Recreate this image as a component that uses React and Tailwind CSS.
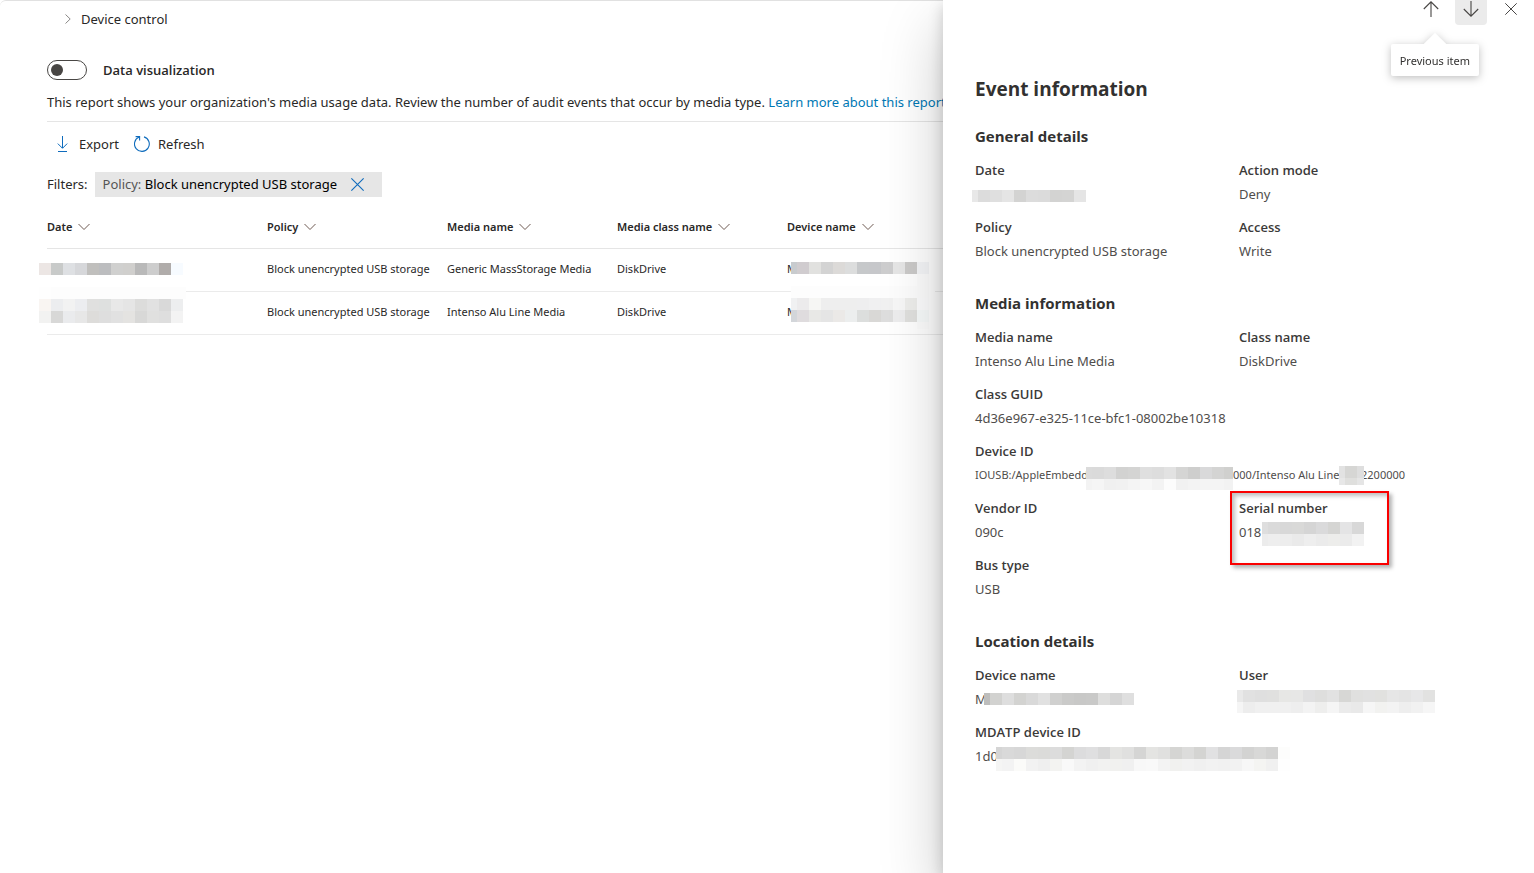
import React from "react";

const columns = [
  { name: "Date", width: "w-[220px]" },
  { name: "Policy", width: "w-[180px]" },
  { name: "Media name", width: "w-[170px]" },
  { name: "Media class name", width: "w-[170px]" },
  { name: "Device name", width: "" },
];

/* Redaction block: rows of 12px cells, the first cell of each row may be narrower. */
function Mosaic({ className, width, height, first = 12, rows }) {
  return (
    <svg
      role="img"
      aria-label="Redacted"
      width={width}
      height={height}
      shapeRendering="crispEdges"
      className={className}
    >
      {rows.map(({ y, h = 12, from = 0, cells }) =>
        cells.split(" ").map((color, i) => {
          const index = i + from;
          return (
            <rect
              key={y + "-" + index}
              x={index === 0 ? 0 : first + (index - 1) * 12}
              y={y}
              width={index === 0 ? first : 12}
              height={h}
              fill={"#" + color}
            />
          );
        })
      )}
    </svg>
  );
}

function ChevronDown() {
  return (
    <svg width="12" height="8" viewBox="0 0 12 8" fill="none" stroke="#6e5a52" aria-hidden="true">
      <path d="M0.5 1 L6 6.5 L11.5 1" />
    </svg>
  );
}

function Cross({ size, className }) {
  return (
    <svg width={size} height={size} viewBox="0 0 12 12" fill="none" stroke="currentColor" className={className} aria-hidden="true">
      <path d="M0.3 0.3 L11.7 11.7 M11.7 0.3 L0.3 11.7" />
    </svg>
  );
}

function Field({ label, wide, children }) {
  return (
    <div className={wide ? "relative col-span-2" : "relative"}>
      <dt className="font-['Open_Sans',sans-serif] text-[13px] leading-5 font-semibold text-[#3b3a39]">{label}</dt>
      <dd className="relative mt-1 flex h-5 text-[13px] leading-5 whitespace-nowrap text-[#4f4d4b]">{children}</dd>
    </div>
  );
}

function Section({ title, className, children }) {
  return (
    <section className={className}>
      <h3 className="font-['Open_Sans',sans-serif] text-[15px] leading-[22px] font-bold text-[#323130]">{title}</h3>
      <dl className="mt-[13px] grid grid-cols-[264px_1fr] gap-y-[13px]">{children}</dl>
    </section>
  );
}

function Report() {
  return (
    <main className="min-w-0 flex-1 overflow-hidden rounded-tl-md border-t border-[#e1e1e1] bg-white pl-[47px]">
      <nav className="flex items-center gap-[10px] pt-2 pl-[18px] text-[13px] leading-5">
        <svg width="6" height="10" viewBox="0 0 6 10" fill="none" stroke="#8a8886" aria-hidden="true">
          <path d="M0.5 0.5 L5.2 5 L0.5 9.5" />
        </svg>
        <a href="#device-control">Device control</a>
      </nav>

      <label className="mt-[31px] flex w-fit items-center gap-4 font-['Open_Sans',sans-serif] text-[13px] leading-5 font-semibold">
        <input
          type="checkbox"
          role="switch"
          className="flex h-5 w-10 appearance-none items-center rounded-full border border-[#484644] pl-[3px] before:size-3 before:rounded-full before:bg-[#484644]"
        />
        Data visualization
      </label>

      <p className="mt-3 border-b border-[#e5e5e5] pb-[9px] text-[13px] leading-5 whitespace-nowrap">
        This report shows your organization's media usage data. Review the number of audit events that occur by media type.{" "}
        <a href="#report" className="text-[#0078b4]">Learn more about this report</a>
      </p>

      <div className="flex h-11 items-center gap-[15px] pl-[10px] text-[13px] leading-5">
        <button type="button" className="flex items-center gap-[10px]">
          <svg width="12" height="16" viewBox="0 0 12 16" fill="none" stroke="#0f6cbd" aria-hidden="true">
            <path d="M5.5 0 V12 M0.8 7.6 L5.5 12.3 L10.2 7.6 M1 15.5 H10" />
          </svg>
          Export
        </button>
        <button type="button" className="flex items-center gap-2">
          <svg width="16" height="16" viewBox="0 0 16 16" fill="none" stroke="#0f6cbd" strokeWidth="1.1" aria-hidden="true">
            <path d="M10 0.9 A7.4 7.4 0 1 1 5.2 1.1" />
            <path d="M1.6 0.6 H5.6 V4.6" />
          </svg>
          Refresh
        </button>
      </div>

      <div className="mt-[6px] flex items-center gap-[7px] text-[13px]">
        <span>Filters:</span>
        <div className="flex h-[25px] items-center bg-[#e6e6e6] pr-[18px] pl-2 text-black">
          <span>
            <span className="text-[#555555]">Policy:</span> Block unencrypted USB storage
          </span>
          <button type="button" aria-label="Remove filter" className="ml-[14px] text-[#0f6cbd]">
            <Cross size={13} />
          </button>
        </div>
      </div>

      <table className="mt-2 w-full table-fixed border-separate border-spacing-0 text-left text-[11px] leading-4">
        <thead>
          <tr className="h-11">
            {columns.map((c) => (
              <th key={c.name} scope="col" className={c.width + " border-b border-[#e5e5e5] p-0 font-semibold"}>
                <button type="button" className="flex items-center gap-[6px]">
                  {c.name}
                  <ChevronDown />
                </button>
              </th>
            ))}
          </tr>
        </thead>
        <tbody className="whitespace-nowrap">
          <tr className="h-[43px]">
            <td className="relative border-b border-[#ebebeb] p-0">
              <Mosaic
                className="absolute top-[14px] -left-2"
                width={144}
                height={12}
                rows={[{ y: 0, cells: "ece6e4 c8cac9 dee0e3 d6d7da c0bfbd bcbdbf d0d0cf d0cfcd b9b9b9 cdcdcd b0acaa f7fbff" }]}
              />
            </td>
            <td className="border-b border-[#ebebeb] p-0 pb-[2px]">Block unencrypted USB storage</td>
            <td className="border-b border-[#ebebeb] p-0 pb-[2px]">Generic MassStorage Media</td>
            <td className="border-b border-[#ebebeb] p-0 pb-[2px]">DiskDrive</td>
            <td className="relative border-b border-[#ebebeb] p-0 pb-[2px]">
              M
              <Mosaic
                className="absolute top-[13px] left-1"
                width={138}
                height={12}
                first={6}
                rows={[{ y: 0, cells: "c8cbce d0cccf e1e1df d3d3d3 dcdad8 dcdddd c6c8ca c6c7ca cdcdce e6e6e6 cbcac9 f5f6f8" }]}
              />
            </td>
          </tr>
          <tr className="h-[43px]">
            <td className="relative border-b border-[#ebebeb] p-0">
              <Mosaic
                className="absolute -top-[5px] -left-2"
                width={147}
                height={36}
                rows={[
                  { y: 0, cells: "fefefe fdfdfd fdfdfd fdfdfd fdfdfd fdfdfd fdfdfd fdfdfd fdfdfd fdfdfd fdfdfd fdfdfd fdfdfd" },
                  { y: 12, cells: "f9f5f2 ecedef f2f2f2 ecedf0 e0e0df dee0df e8e8e8 e5e5e5 dcdcdb e1e1e1 d9d9d9 edeeef" },
                  { y: 24, cells: "f2f2f1 d8d8d7 eaebed e7e7e7 dddcda dedede e1e1e1 e4e3e1 d8d8d7 e0e0df dedede f3f3f3" },
                ]}
              />
            </td>
            <td className="border-b border-[#ebebeb] p-0 pb-[2px]">Block unencrypted USB storage</td>
            <td className="border-b border-[#ebebeb] p-0 pb-[2px]">Intenso Alu Line Media</td>
            <td className="border-b border-[#ebebeb] p-0 pb-[2px]">DiskDrive</td>
            <td className="relative border-b border-[#ebebeb] p-0 pb-[2px]">
              M
              <Mosaic
                className="absolute -top-[18px] left-1"
                width={144}
                height={55}
                first={6}
                rows={[
                  { y: 0, from: 9, cells: "ffffff ffffff fdfdfd" },
                  { y: 12, cells: "fdfdfd fdfdfd fdfdfd fdfdfd fdfdfd fdfdfd fdfdfd fdfdfd fdfdfd fdfdfd fdfdfd fdfdfd ffffff" },
                  { y: 24, cells: "f0f1f2 ecebec f6f6f4 eeeeee eeeeee eeeeee eeeeef f0f0f1 f1f1f1 f7f7f7 eeeeec fdfdfe ffffff" },
                  { y: 36, cells: "d3d6da dfdcde e8e8e6 e5e5e5 ebe9e7 eceeee dcdedd d9d8d6 dedede ededee e0e0de f8fbfb ffffff" },
                  { y: 48, h: 7, from: 9, cells: "ffffff ffffff fdfdfd ffffff" },
                ]}
              />
            </td>
          </tr>
        </tbody>
      </table>
    </main>
  );
}

function EventPanel() {
  return (
    <aside className="relative z-10 w-[591px] shrink-0 bg-white pl-8 shadow-[0_26px_58px_rgba(0,0,0,0.22),0_5px_14px_rgba(0,0,0,0.18)]">
      <div className="flex h-[25px] justify-end gap-2 pr-[7px] text-[#484644]">
        <button type="button" aria-label="Previous item" className="flex w-8 items-center justify-center pb-[7px]">
          <svg width="16" height="16" viewBox="0 0 16 16" fill="none" stroke="currentColor" strokeWidth="1.1" aria-hidden="true">
            <path d="M8 16 V0.8 M0.8 8 L8 0.8 L15.2 8" />
          </svg>
        </button>
        <button type="button" aria-label="Next item" className="flex w-8 items-center justify-center rounded-b-sm bg-[#ebebeb] pb-[7px]">
          <svg width="16" height="16" viewBox="0 0 16 16" fill="none" stroke="currentColor" strokeWidth="1.1" aria-hidden="true">
            <path d="M8 0 V15.2 M0.8 8 L8 15.2 L15.2 8" />
          </svg>
        </button>
        <button type="button" aria-label="Close" className="flex w-8 items-center justify-center pb-[7px]">
          <Cross size={12} />
        </button>
      </div>

      <div role="tooltip" className="absolute top-11 right-[55px] drop-shadow-[0_2px_4px_rgba(0,0,0,0.25)]">
        <div className="absolute -top-2 left-[36px] size-4 rotate-45 bg-white" />
        <div className="relative rounded-xs bg-white px-[9px] pt-[9px] pb-[7px] text-[11px] leading-4 whitespace-nowrap text-[#323130]">Previous item</div>
      </div>

      <h2 className="mt-[50px] font-['Open_Sans',sans-serif] text-[19px] leading-7 font-bold text-[#323130]">Event information</h2>

      <Section title="General details" className="mt-[22px]">
        <Field label="Date">
          <Mosaic
            className="absolute top-[6px] -left-[3px]"
            width={114}
            height={12}
            first={6}
            rows={[{ y: 0, cells: "e8e8e8 dcdcdc dfdfdf e5e5e5 d3d3d2 dcdcdc dbdbdb d3d3d2 d4d4d3 e5e5e5" }]}
          />
        </Field>
        <Field label="Action mode">Deny</Field>
        <Field label="Policy">Block unencrypted USB storage</Field>
        <Field label="Access">Write</Field>
      </Section>

      <Section title="Media information" className="mt-[31px]">
        <Field label="Media name">Intenso Alu Line Media</Field>
        <Field label="Class name">DiskDrive</Field>
        <Field label="Class GUID" wide>4d36e967-e325-11ce-bfc1-08002be10318</Field>
        <Field label="Device ID" wide>
          <span className="w-[111px] text-[11px]">IOUSB:/AppleEmbedd</span>
          <Mosaic
            className="relative mt-[2px] shrink-0"
            width={147}
            height={23}
            first={6}
            rows={[
              { y: 0, cells: "dbdbdb dadada dddddd d2d2d1 d4d4d3 dfdfdf dddddd e2e2e2 d5d5d4 cececd d9d9da d4d4d3 d0d0ce" },
              { y: 12, h: 11, cells: "f3f3f3 f5f5f5 f0f0f0 f1f1f1 f4f4f4 f7f7f7 f3f3f3 fcfcfc f1f1f1 f3f3f3 f4f4f4 f4f4f4 f2f2f2" },
            ]}
          />
          <span className="w-[106px] text-[11px]">000/Intenso Alu Line</span>
          <Mosaic
            className="relative mt-px shrink-0"
            width={25}
            height={19}
            first={6}
            rows={[
              { y: 0, cells: "e2e2e2 d6d6d4 dedede" },
              { y: 12, h: 7, cells: "e7e7e7 dfdfdd e5e5e5" },
            ]}
          />
          <span className="-ml-[3px] text-[11px]">2200000</span>
        </Field>
        <Field label="Vendor ID">090c</Field>
        <Field label="Serial number">
          018
          <Mosaic
            className="absolute left-[23px]"
            width={102}
            height={24}
            first={6}
            rows={[
              { y: 0, cells: "dedede dadada d8d8d8 d9d9d8 d5d5d5 dadadb d5d5d3 e4e4e5 d8d8d8" },
              { y: 12, cells: "ececec eeeeee ededed eaeaea eeeeee ebebeb ededeb ebebeb f2f2f2" },
            ]}
          />
          <div className="absolute -top-[31px] -left-[9px] h-[74px] w-[159px] border-2 border-[#fa0000] shadow-[3px_3px_4px_rgba(0,0,0,0.3),inset_3px_3px_4px_rgba(0,0,0,0.25)]" />
        </Field>
        <Field label="Bus type">USB</Field>
      </Section>

      <Section title="Location details" className="mt-[31px]">
        <Field label="Device name">
          M
          <Mosaic
            className="absolute top-[4px] left-[9px]"
            width={150}
            height={12}
            first={6}
            rows={[{ y: 0, cells: "bdbdbc d2d2d0 dedede d3d3d1 d9d9d9 e1e1e1 d0d0cf cacac9 c8c8c7 c9c9c8 dededd d5d5d5 dfdfdf" }]}
          />
        </Field>
        <Field label="User">
          <Mosaic
            className="absolute top-px -left-[2px]"
            width={198}
            height={23}
            first={6}
            rows={[
              { y: 0, cells: "e9e9e9 e1e1e1 dfdfdf e0e0df e7e7e5 e7e7e6 e0e0e1 dededd e2e2e2 d7d7d5 e0e0df e1e1e1 e1e1df e6e6e6 e4e4e4 e7e7e8 e2e2e1" },
              { y: 12, h: 11, cells: "f5f5f5 ededed f0f0f0 f0f0f0 f0f0f0 eeeeee f3f3f3 eeeeed f5f5f5 ebebeb e9e9e9 f6f6f6 f2f2f0 f3f3f3 eeeeee f1f1f1 f6f6f6" },
            ]}
          />
        </Field>
        <Field label="MDATP device ID" wide>
          1d0
          <Mosaic
            className="absolute top-px left-[21px]"
            width={294}
            height={24}
            first={6}
            rows={[
              { y: 0, cells: "d5d5d5 d9d9d9 d7d7d7 dcdcda dbdbd9 dcdcdc d4d4d2 dcdcdd dfdfe0 d8d8d8 e4e4e2 e0e0df d5d5d4 e4e4e2 e0e0df d5d5d3 dcdcdb d4d4d2 e1e1e2 d5d5d5 dadadb d3d3d2 d8d8d7 d3d3d2 fdfdfc" },
              { y: 12, cells: "f5f5f4 f3f3f3 fbfbf9 f2f2f2 efefef f3f3f1 f9f9f9 f3f3f3 f0f0f0 f2f2f1 f1f1ef f0f0f0 f8f8f8 f9f9f9 f3f3f3 f1f1ef f2f2f2 f0f0f0 f2f2f2 f1f1f1 f2f2f2 f7f7f7 f4f4f2 f0f0f0 fefefe" },
            ]}
          />
        </Field>
      </Section>
    </aside>
  );
}

export default function App() {
  return (
    <div className="flex min-h-screen overflow-hidden bg-white font-['Noto_Sans','Open_Sans',sans-serif] text-[#292827]">
      <Report />
      <EventPanel />
    </div>
  );
}
